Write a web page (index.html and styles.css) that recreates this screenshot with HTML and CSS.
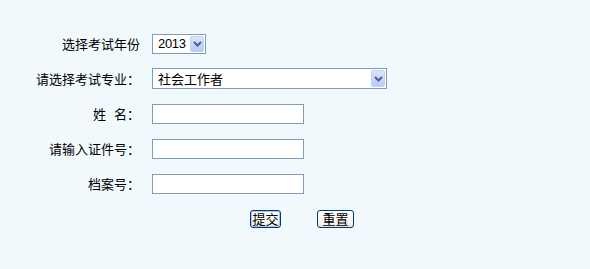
FILE: index.html
```html
<!DOCTYPE html>
<html lang="zh-CN">
<head>
<meta charset="utf-8">
<title>成绩查询</title>
<link rel="stylesheet" href="styles.css">
</head>
<body>
<form class="form">
  <div class="label">选择考试年份</div>
  <div class="field">
    <div class="select select-year">
      <span class="select-text num">2013</span>
      <span class="arrow"><svg width="9" height="6" viewBox="0 0 9 6"><path d="M1 1 L4.5 4.5 L8 1" stroke="#4d6185" stroke-width="2" fill="none"/></svg></span>
    </div>
  </div>

  <div class="label">请选择考试专业：</div>
  <div class="field">
    <div class="select select-major">
      <span class="select-text">社会工作者</span>
      <span class="arrow"><svg width="9" height="6" viewBox="0 0 9 6"><path d="M1 1 L4.5 4.5 L8 1" stroke="#4d6185" stroke-width="2" fill="none"/></svg></span>
    </div>
  </div>

  <div class="label">姓<span class="gap"></span>名：</div>
  <div class="field"><input class="text-input" type="text"></div>

  <div class="label">请输入证件号：</div>
  <div class="field"><input class="text-input" type="text"></div>

  <div class="label">档案号：</div>
  <div class="field"><input class="text-input" type="text"></div>

  <div class="buttons">
    <button type="button" class="btn btn-submit">提交</button>
    <button type="button" class="btn btn-reset">重置</button>
  </div>
</form>
</body>
</html>
```

FILE: styles.css
```css
html, body {
  margin: 0;
  padding: 0;
  background: #f2f9fd;
}

body {
  font-family: "Noto Sans CJK SC", "Liberation Sans", sans-serif;
  font-size: 13px;
  color: #000;
}

.form {
  display: grid;
  grid-template-columns: 140px 1fr;
  grid-auto-rows: 35px;
  column-gap: 12px;
  align-items: center;
  padding-top: 26px;
  margin: 0;
}

.label {
  text-align: right;
  font-size: 13px;
  line-height: 14px;
  white-space: nowrap;
}

.gap {
  display: inline-block;
  width: 8px;
}

.field {
  display: flex;
  align-items: center;
}

.select {
  display: flex;
  align-items: center;
  box-sizing: border-box;
  height: 20px;
  border: 1px solid #7f9db9;
  background: #fff;
  padding: 1px;
}

.select-year {
  width: 54px;
}

.select-major {
  width: 235px;
  height: 21px;
}

.select-text {
  flex: 1;
  padding-left: 4px;
  font-size: 13px;
  line-height: 16px;
  white-space: nowrap;
}

.num {
  font-family: "Liberation Sans", sans-serif;
  font-size: 13px;
  letter-spacing: -0.3px;
}

.arrow {
  display: flex;
  align-items: center;
  justify-content: center;
  width: 14px;
  height: 16px;
  box-sizing: border-box;
  border: 1px solid #c3d0f6;
  border-radius: 2px;
  background: linear-gradient(#dde5fd, #b9c8f6);
}

.select-major .arrow {
  height: 17px;
}

.text-input {
  box-sizing: border-box;
  width: 152px;
  height: 20px;
  margin: 0;
  border: 1px solid #7f9db9;
  background: #fff;
  padding: 0 2px;
  font: inherit;
}

.buttons {
  grid-column: 2;
  display: flex;
  align-items: center;
  gap: 36px;
  padding-left: 98px;
  height: 36px;
}

.btn {
  display: flex;
  align-items: center;
  justify-content: center;
  box-sizing: border-box;
  height: 18px;
  padding: 0;
  margin: 0;
  border: 1px solid #003c74;
  border-radius: 3px;
  background: linear-gradient(#ffffff, #f4f3ee 75%, #e2dfd2);
  font-family: "Noto Sans CJK SC", sans-serif;
  font-size: 13px;
  line-height: 13px;
  color: #000;
}

.btn-submit {
  width: 31px;
  box-shadow: inset 0 0 0 1px #a8c3f5;
}

.btn-reset {
  width: 37px;
}
```
